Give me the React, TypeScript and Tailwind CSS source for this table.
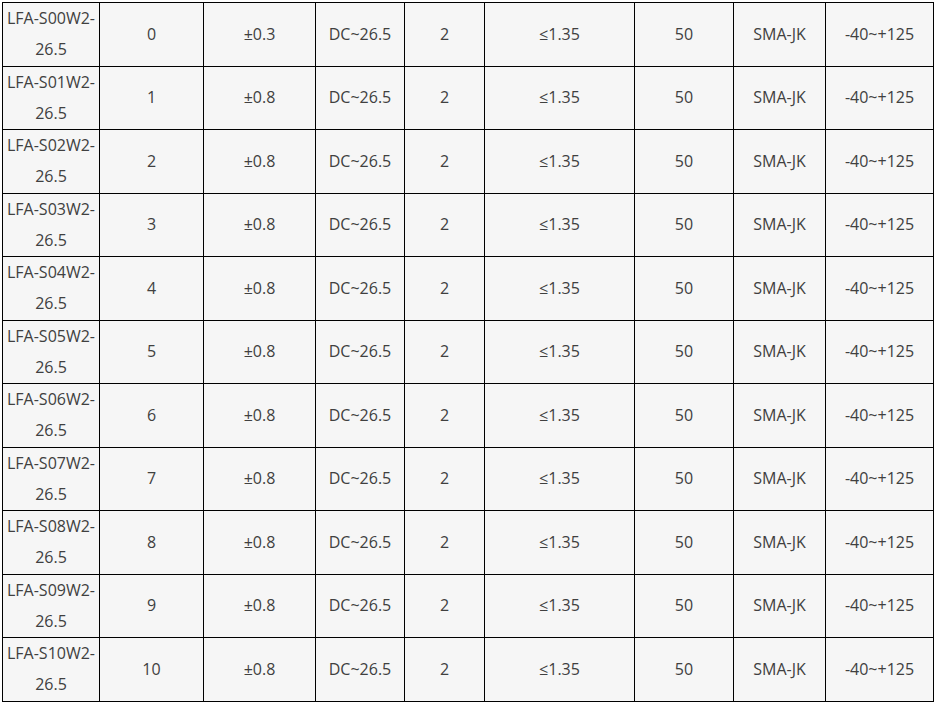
const widths = [97, 104, 112, 89, 80, 150, 99, 92, 108];

const rows = Array.from({ length: 11 }, (_, i) => {
  const n = String(i).padStart(2, '0');
  return [
    `LFA-S${n}W2-26.5`,
    String(i),
    i === 0 ? '±0.3' : '±0.8',
    'DC~26.5',
    '2',
    '≤1.35',
    '50',
    'SMA-JK',
    '-40~+125',
  ];
});

const App = () => {
  return (
    <div className="min-h-screen bg-white pl-[2px] pt-[2px]">
      <table
        className="table-fixed border-collapse bg-[#f6f6f6] text-[16px] leading-[31px] text-[#404040]"
        style={{ fontFamily: '"Open Sans", "Noto Sans", sans-serif' }}
      >
        <colgroup>
          {widths.map((w, i) => (
            <col key={i} style={{ width: w }} />
          ))}
        </colgroup>
        <tbody>
          {rows.map((row) => (
            <tr key={row[0]} className="h-[63.5px]">
              {row.map((cell, j) => (
                <td key={j} className="border border-black px-[3px] text-center align-middle">
                  {cell}
                </td>
              ))}
            </tr>
          ))}
        </tbody>
      </table>
    </div>
  );
};

export default App;
